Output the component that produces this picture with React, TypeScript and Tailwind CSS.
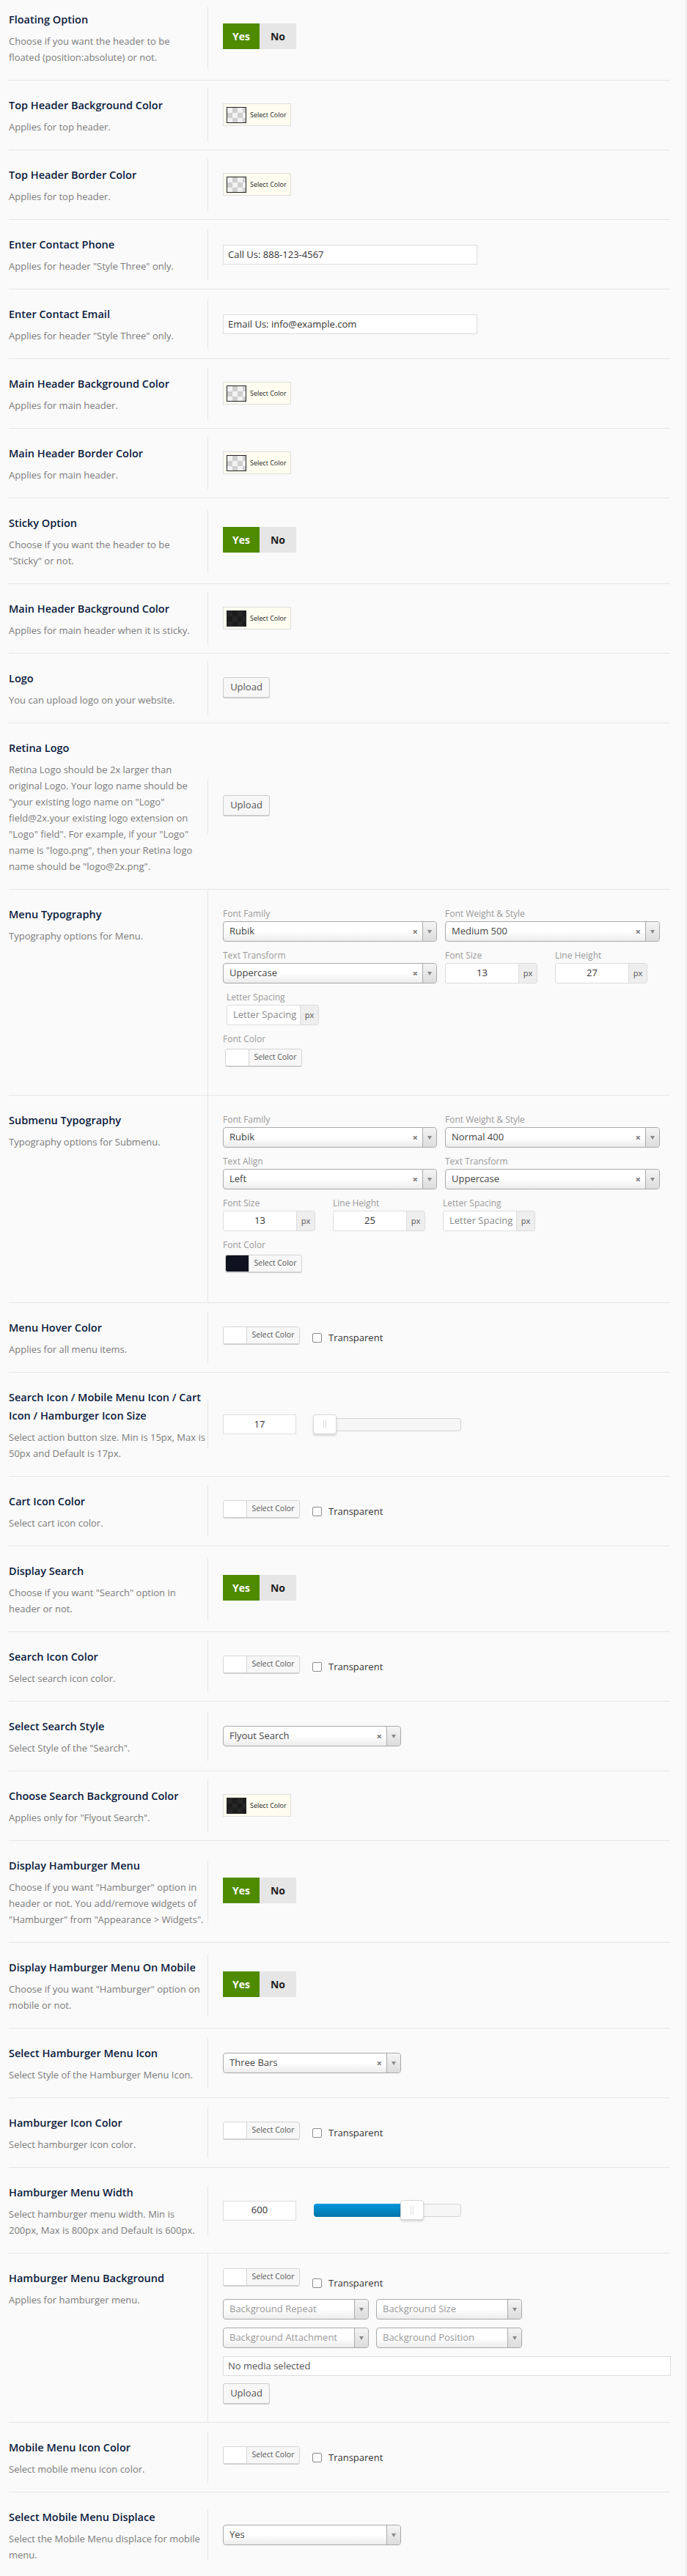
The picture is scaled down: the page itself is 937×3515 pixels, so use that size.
import type { ReactNode } from 'react'

const checker =
  'bg-[conic-gradient(#cfcfcf_25%,#f2f2f2_0_50%,#cfcfcf_0_75%,#f2f2f2_0)] bg-[length:14px_14px]'
const checkerDark =
  'bg-[conic-gradient(#1c1c1c_25%,#262626_0_50%,#1c1c1c_0_75%,#262626_0)] bg-[length:14px_14px]'

function Row({
  title,
  desc,
  children,
}: {
  title: string[]
  desc: string[]
  children: ReactNode
}) {
  return (
    <div className="flex border-b border-[#e6e6e6]">
      <div className="w-[271px] shrink-0 self-start pt-[21px] pb-5 pr-[11px]">
        <h3 className="text-[14.5px] leading-[25px] font-semibold whitespace-nowrap text-[#0b1a3c]">
          {title.map((t) => (
            <div key={t}>{t}</div>
          ))}
        </h3>
        <div className="mt-[6px] text-[13px] leading-[22px] whitespace-nowrap text-[#7a7a7a]">
          {desc.map((d) => (
            <div key={d}>{d}</div>
          ))}
        </div>
      </div>
      <div className="flex-1 self-center border-l border-[#e6e6e6] py-5 pl-5">{children}</div>
    </div>
  )
}

function Toggle() {
  return (
    <div className="mt-[3px] mb-[7px] flex h-[35px] w-[100px]">
      <span className="flex w-[50px] items-center justify-center bg-[#4f8b00] text-[14px] font-bold text-white">
        Yes
      </span>
      <span className="flex w-[50px] items-center justify-center bg-[#e6e6e6] text-[14px] font-bold text-[#1f1f1f]">
        No
      </span>
    </div>
  )
}

function BeigePicker({ dark = false }: { dark?: boolean }) {
  return (
    <div className="mb-px flex h-[31px] w-[93px] items-center border border-[#dedede] bg-[#fffdf0] pl-1">
      <span className={`h-[22px] w-[27px] border border-[#222] ${dark ? checkerDark : checker}`} />
      <span className="ml-[5px] text-[9px] text-[#222]">Select Color</span>
    </div>
  )
}

function WpPicker({ swatch = 'bg-white' }: { swatch?: string }) {
  return (
    <div className="flex h-[24px] w-[105px] shrink-0 overflow-hidden rounded-[3px] border border-[#d4d4d4] shadow-[0_1px_0_#ccc]">
      <span className={`w-[31px] ${swatch}`} />
      <span className="flex flex-1 items-center justify-center border-l border-[#d4d4d4] bg-[#f7f7f7] text-[10.5px] text-[#555]">
        Select Color
      </span>
    </div>
  )
}

function Transparent({ pt = 'pt-[8px]' }: { pt?: string }) {
  return (
    <label className={`ml-[17px] flex items-center gap-[9px] ${pt}`}>
      <span className="h-[13px] w-[13px] rounded-[2px] border border-[#8c8c8c] bg-white" />
      <span className="text-[13px] leading-[14px] text-[#333]">Transparent</span>
    </label>
  )
}

function PickerWithTransparent() {
  return (
    <div className="flex items-start pb-[6px]">
      <WpPicker />
      <Transparent />
    </div>
  )
}

function TextInput({ value }: { value: string }) {
  return (
    <div className="mt-px flex h-[27px] w-[347px] items-center border border-[#dddddd] bg-white pl-[6px] text-[13px] text-[#333]">
      {value}
    </div>
  )
}

function Arrow() {
  return (
    <span className="flex h-full w-[19px] items-center justify-center rounded-r-[4px] border-l border-[#aaa] bg-linear-to-b from-[#f4f4f4] to-[#dcdcdc]">
      <span className="h-0 w-0 border-x-[3px] border-t-[5px] border-x-transparent border-t-[#888]" />
    </span>
  )
}

function Select({
  value,
  className,
  clear = true,
  placeholder = false,
}: {
  value: string
  className: string
  clear?: boolean
  placeholder?: boolean
}) {
  return (
    <div
      className={`flex h-[28px] items-center rounded-[4px] border border-[#aaa] bg-linear-to-b from-white from-50% to-[#ececec] ${className}`}
    >
      <span className={`flex-1 truncate pl-2 text-[13px] ${placeholder ? 'text-[#999]' : 'text-[#444]'}`}>{value}</span>
      {clear && <span className="mr-[6px] text-[13px] leading-none font-bold text-[#777]">×</span>}
      <Arrow />
    </div>
  )
}

function UnitInput({ value, placeholder = false }: { value: string; placeholder?: boolean }) {
  return (
    <div className="flex h-[28px] w-[126px] rounded-[3px] border border-[#ddd] bg-white">
      <span
        className={`flex flex-1 items-center text-[13px] ${placeholder ? 'justify-start pl-[8px] text-[#888]' : 'justify-center text-[#333]'}`}
      >
        {value}
      </span>
      <span className="flex w-[25px] items-center justify-center border-l border-[#ddd] bg-[#eee] text-[11px] text-[#555]">
        px
      </span>
    </div>
  )
}

function Label({ children }: { children: ReactNode }) {
  return <div className="text-[12px] leading-5 text-[#999]">{children}</div>
}

function Upload() {
  return (
    <div className="inline-flex h-[28px] w-[64px] items-center justify-center rounded-[3px] border border-[#ccc] bg-[#f7f7f7] text-[13px] text-[#555] shadow-[0_1px_0_#ccc]">
      Upload
    </div>
  )
}

function Slider({ fill }: { fill: number }) {
  return (
    <div className="ml-6 flex h-[27px] w-[201px] items-center">
      <div className="relative h-[18px] w-full rounded-[4px] border border-[#d3d3d3] bg-[#f6f6f6]">
        <div
          className="absolute inset-y-[-1px] left-[-1px] rounded-l-[4px] bg-linear-to-b from-[#0098de] to-[#0073aa]"
          style={{ width: `${fill}px` }}
        />
        <div
          className="absolute top-[-6px] flex h-[27px] w-[32px] items-center justify-center gap-[2px] rounded-[3px] border border-[#d9d9d9] bg-white shadow-[0_2px_3px_rgba(0,0,0,0.15)]"
          style={{ left: `${Math.max(fill - 4, -2)}px` }}
        >
          <span className="h-[12px] w-px bg-[#ddd]" />
          <span className="h-[12px] w-px bg-[#ddd]" />
        </div>
      </div>
    </div>
  )
}

function NumberSlider({ value, fill }: { value: string; fill: number }) {
  return (
    <div className="flex items-center">
      <div className="flex h-[27px] w-[100px] items-center justify-center border border-[#ddd] bg-white text-[13px] text-[#333]">
        {value}
      </div>
      <Slider fill={fill} />
    </div>
  )
}

function FontColor({ swatch }: { swatch: string }) {
  return (
    <div className="mt-[3px] ml-[3px]">
      <WpPicker swatch={swatch} />
    </div>
  )
}

export default function App() {
  return (
    <div className="min-h-screen bg-[#fafafa] font-['Open_Sans',sans-serif]">
      <div className="-mt-[7px] w-[936px] border-r border-[#e6e6e6] pl-3 pr-[21px]">
        <Row title={['Floating Option']} desc={['Choose if you want the header to be', 'floated (position:absolute) or not.']}>
          <Toggle />
        </Row>
        <Row title={['Top Header Background Color']} desc={['Applies for top header.']}>
          <BeigePicker />
        </Row>
        <Row title={['Top Header Border Color']} desc={['Applies for top header.']}>
          <BeigePicker />
        </Row>
        <Row title={['Enter Contact Phone']} desc={['Applies for header "Style Three" only.']}>
          <TextInput value="Call Us: 888-123-4567" />
        </Row>
        <Row title={['Enter Contact Email']} desc={['Applies for header "Style Three" only.']}>
          <TextInput value="Email Us: info@example.com" />
        </Row>
        <Row title={['Main Header Background Color']} desc={['Applies for main header.']}>
          <BeigePicker />
        </Row>
        <Row title={['Main Header Border Color']} desc={['Applies for main header.']}>
          <BeigePicker />
        </Row>
        <Row title={['Sticky Option']} desc={['Choose if you want the header to be', '"Sticky" or not.']}>
          <Toggle />
        </Row>
        <Row title={['Main Header Background Color']} desc={['Applies for main header when it is sticky.']}>
          <BeigePicker dark />
        </Row>
        <Row title={['Logo']} desc={['You can upload logo on your website.']}>
          <div className="pt-[2px] pb-[4px]">
            <Upload />
          </div>
        </Row>
        <Row
          title={['Retina Logo']}
          desc={[
            'Retina Logo should be 2x larger than',
            'original Logo. Your logo name should be',
            '"your existing logo name on "Logo"',
            'field@2x.your existing logo extension on',
            '"Logo" field". For example, if your "Logo"',
            'name is "logo.png", then your Retina logo',
            'name should be "logo@2x.png".',
          ]}
        >
          <div className="pt-[2px] pb-[5px]">
            <Upload />
          </div>
        </Row>

        {/* Menu Typography */}
        <Row title={['Menu Typography']} desc={['Typography options for Menu.']}>
          <div className="pt-[3px] pb-[19px]">
            <div className="flex gap-[11px]">
              <div>
                <Label>Font Family</Label>
                <Select value="Rubik" className="w-[292px]" />
              </div>
              <div>
                <Label>Font Weight &amp; Style</Label>
                <Select value="Medium 500" className="w-[293px]" />
              </div>
            </div>
            <div className="mt-[9px] flex gap-[11px]">
              <div>
                <Label>Text Transform</Label>
                <Select value="Uppercase" className="w-[292px]" />
              </div>
              <div className="flex">
                <div className="w-[150px]">
                  <Label>Font Size</Label>
                  <UnitInput value="13" />
                </div>
                <div className="w-[150px]">
                  <Label>Line Height</Label>
                  <UnitInput value="27" />
                </div>
              </div>
            </div>
            <div className="mt-[9px] ml-[5px]">
              <Label>Letter Spacing</Label>
              <UnitInput value="Letter Spacing" placeholder />
            </div>
            <div className="mt-[9px]">
              <Label>Font Color</Label>
              <FontColor swatch="bg-white" />
            </div>
          </div>
        </Row>

        {/* Submenu Typography */}
        <Row title={['Submenu Typography']} desc={['Typography options for Submenu.']}>
          <div className="pt-[3px] pb-[21px]">
            <div className="flex gap-[11px]">
              <div>
                <Label>Font Family</Label>
                <Select value="Rubik" className="w-[292px]" />
              </div>
              <div>
                <Label>Font Weight &amp; Style</Label>
                <Select value="Normal 400" className="w-[293px]" />
              </div>
            </div>
            <div className="mt-[9px] flex gap-[11px]">
              <div>
                <Label>Text Align</Label>
                <Select value="Left" className="w-[292px]" />
              </div>
              <div>
                <Label>Text Transform</Label>
                <Select value="Uppercase" className="w-[293px]" />
              </div>
            </div>
            <div className="mt-[9px] flex">
              <div className="w-[150px]">
                <Label>Font Size</Label>
                <UnitInput value="13" />
              </div>
              <div className="w-[150px]">
                <Label>Line Height</Label>
                <UnitInput value="25" />
              </div>
              <div className="w-[150px]">
                <Label>Letter Spacing</Label>
                <UnitInput value="Letter Spacing" placeholder />
              </div>
            </div>
            <div className="mt-[9px]">
              <Label>Font Color</Label>
              <FontColor swatch="bg-[#0f1320]" />
            </div>
          </div>
        </Row>

        <Row title={['Menu Hover Color']} desc={['Applies for all menu items.']}>
          <PickerWithTransparent />
        </Row>
        <Row
          title={['Search Icon / Mobile Menu Icon / Cart', 'Icon / Hamburger Icon Size']}
          desc={['Select action button size. Min is 15px, Max is', '50px and Default is 17px.']}
        >
          <NumberSlider value="17" fill={0} />
        </Row>
        <Row title={['Cart Icon Color']} desc={['Select cart icon color.']}>
          <PickerWithTransparent />
        </Row>
        <Row title={['Display Search']} desc={['Choose if you want "Search" option in', 'header or not.']}>
          <Toggle />
        </Row>
        <Row title={['Search Icon Color']} desc={['Select search icon color.']}>
          <PickerWithTransparent />
        </Row>
        <Row title={['Select Search Style']} desc={['Select Style of the "Search".']}>
          <Select value="Flyout Search" className="w-[243px]" />
        </Row>
        <Row title={['Choose Search Background Color']} desc={['Applies only for "Flyout Search".']}>
          <BeigePicker dark />
        </Row>
        <Row
          title={['Display Hamburger Menu']}
          desc={[
            'Choose if you want "Hamburger" option in',
            'header or not. You add/remove widgets of',
            '"Hamburger" from "Appearance > Widgets".',
          ]}
        >
          <Toggle />
        </Row>
        <Row
          title={['Display Hamburger Menu On Mobile']}
          desc={['Choose if you want "Hamburger" option on', 'mobile or not.']}
        >
          <Toggle />
        </Row>
        <Row title={['Select Hamburger Menu Icon']} desc={['Select Style of the Hamburger Menu Icon.']}>
          <Select value="Three Bars" className="w-[243px]" />
        </Row>
        <Row title={['Hamburger Icon Color']} desc={['Select hamburger icon color.']}>
          <PickerWithTransparent />
        </Row>
        <Row
          title={['Hamburger Menu Width']}
          desc={['Select hamburger menu width. Min is', '200px, Max is 800px and Default is 600px.']}
        >
          <NumberSlider value="600" fill={121} />
        </Row>
        <Row title={['Hamburger Menu Background']} desc={['Applies for hamburger menu.']}>
          <div className="pb-[5px]">
            <div className="flex items-start">
              <WpPicker />
              <Transparent pt="pt-[13px]" />
            </div>
            <div className="mt-[15px] flex gap-[10px]">
              <Select value="Background Repeat" className="w-[199px]" clear={false} placeholder />
              <Select value="Background Size" className="w-[199px]" clear={false} placeholder />
            </div>
            <div className="mt-[11px] flex gap-[10px]">
              <Select value="Background Attachment" className="w-[199px]" clear={false} placeholder />
              <Select value="Background Position" className="w-[199px]" clear={false} placeholder />
            </div>
            <div className="mt-[11px] flex h-[27px] w-[611px] items-center border border-[#ddd] bg-white pl-[6px] text-[13px] text-[#555]">
              No media selected
            </div>
            <div className="mt-[10px]">
              <Upload />
            </div>
          </div>
        </Row>
        <Row title={['Mobile Menu Icon Color']} desc={['Select mobile menu icon color.']}>
          <PickerWithTransparent />
        </Row>
        <Row title={['Select Mobile Menu Displace']} desc={['Select the Mobile Menu displace for mobile', 'menu.']}>
          <div className="py-px">
            <Select value="Yes" className="w-[243px]" clear={false} />
          </div>
        </Row>
      </div>
    </div>
  )
}
